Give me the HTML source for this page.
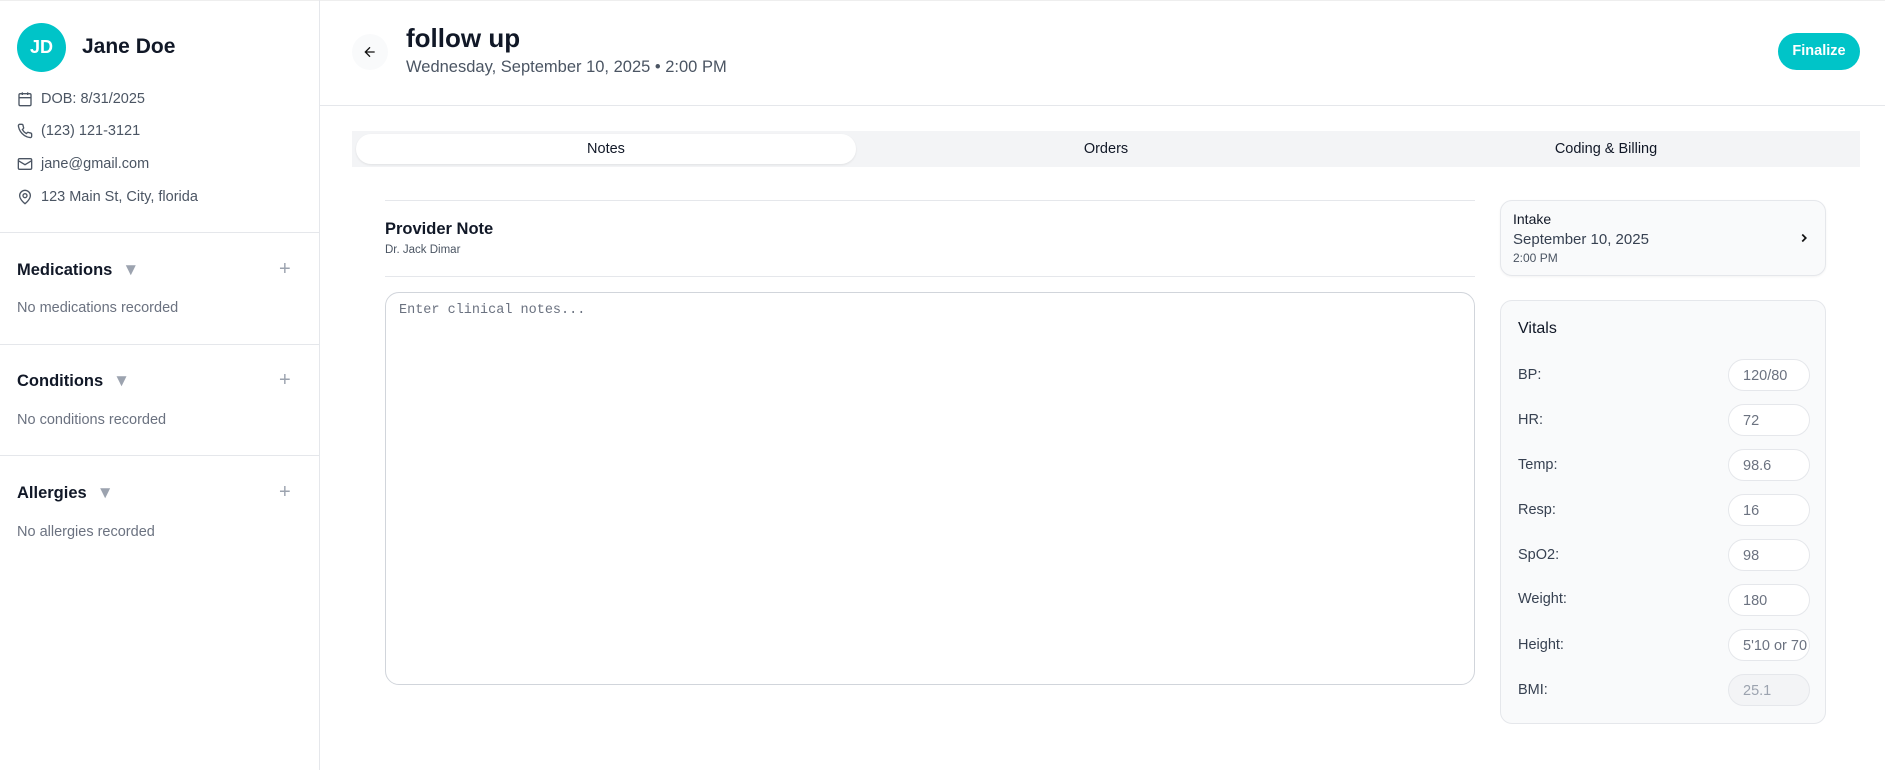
<!DOCTYPE html>
<html><head><meta charset="utf-8"><style>
*{box-sizing:border-box;margin:0;padding:0}
body{width:1885px;height:770px;position:relative;background:#fff;font-family:"Liberation Sans",Arial,sans-serif;color:#111827;overflow:hidden}
.a{position:absolute;white-space:nowrap}
.side{position:absolute;left:0;top:0;width:320px;height:770px;border-right:1px solid #e5e7eb}
.hr{position:absolute;height:1px;background:#e5e7eb}
.muted{color:#4b5563}
.lbl{font-size:14.5px;color:#374151}
.inp{position:absolute;left:1728px;width:82px;height:32px;border:1px solid #e5e7eb;border-radius:16px;background:#fff;font-size:14.5px;color:#6b7280;padding:8px 0 0 14px;overflow:hidden;white-space:nowrap}
.sec{font-size:16.5px;font-weight:bold;color:#111827}
.tri{color:#9ca3af;font-size:17px;margin-left:10px}
.plus{position:absolute;left:279px;font-size:20px;color:#9ca3af;font-weight:300}
</style></head><body>
<div class="hr" style="left:0;top:0;width:1885px;background:#eee"></div>
<div class="side"></div>
<div class="a" style="left:17px;top:23px;width:49px;height:49px;border-radius:50%;background:#00c4c8;color:#fff;font-size:18px;font-weight:bold;text-align:center;line-height:49px">JD</div>
<div class="a" style="left:82px;top:35px;font-size:21px;font-weight:bold">Jane Doe</div>
<svg class="a" style="left:17px;top:91px" width="16" height="16" viewBox="0 0 24 24" fill="none" stroke="#4b5563" stroke-width="2"><rect x="3" y="4" width="18" height="18" rx="2"/><path d="M16 2v4M8 2v4M3 10h18"/></svg>
<div class="a muted" style="left:41px;top:91px;font-size:14.5px">DOB: 8/31/2025</div>
<svg class="a" style="left:17px;top:123px" width="16" height="16" viewBox="0 0 24 24" fill="none" stroke="#4b5563" stroke-width="2"><path d="M22 16.9v3a2 2 0 0 1-2.2 2 19.8 19.8 0 0 1-8.6-3.1 19.5 19.5 0 0 1-6-6A19.8 19.8 0 0 1 2.1 4.2 2 2 0 0 1 4.1 2h3a2 2 0 0 1 2 1.7c.1 1 .4 1.9.7 2.8a2 2 0 0 1-.5 2.1L8 9.9a16 16 0 0 0 6 6l1.3-1.3a2 2 0 0 1 2.1-.4c.9.3 1.8.6 2.8.7a2 2 0 0 1 1.7 2z"/></svg>
<div class="a muted" style="left:41px;top:123px;font-size:14.5px">(123) 121-3121</div>
<svg class="a" style="left:17px;top:156px" width="16" height="16" viewBox="0 0 24 24" fill="none" stroke="#4b5563" stroke-width="2"><rect x="2" y="4" width="20" height="16" rx="2"/><path d="m22 7-10 6L2 7"/></svg>
<div class="a muted" style="left:41px;top:156px;font-size:14.5px">jane@gmail.com</div>
<svg class="a" style="left:17px;top:189px" width="16" height="16" viewBox="0 0 24 24" fill="none" stroke="#4b5563" stroke-width="2"><path d="M20 10c0 6-8 12-8 12s-8-6-8-12a8 8 0 0 1 16 0z"/><circle cx="12" cy="10" r="3"/></svg>
<div class="a muted" style="left:41px;top:189px;font-size:14.5px">123 Main St, City, florida</div>
<div class="hr" style="left:0;top:232px;width:320px"></div>
<div class="a sec" style="left:17px;top:260px">Medications<span class="tri">▼</span></div><div class="a plus" style="top:258px">+</div>
<div class="a" style="left:17px;top:300px;font-size:14.5px;color:#6b7280">No medications recorded</div>
<div class="hr" style="left:0;top:344px;width:320px"></div>
<div class="a sec" style="left:17px;top:371px">Conditions<span class="tri">▼</span></div><div class="a plus" style="top:369px">+</div>
<div class="a" style="left:17px;top:412px;font-size:14.5px;color:#6b7280">No conditions recorded</div>
<div class="hr" style="left:0;top:455px;width:320px"></div>
<div class="a sec" style="left:17px;top:483px">Allergies<span class="tri">▼</span></div><div class="a plus" style="top:481px">+</div>
<div class="a" style="left:17px;top:524px;font-size:14.5px;color:#6b7280">No allergies recorded</div>

<div class="a" style="left:352px;top:34px;width:36px;height:36px;border-radius:50%;background:#f9fafb"></div>
<svg class="a" style="left:362px;top:44px" width="16" height="16" viewBox="0 0 24 24" fill="none" stroke="#111" stroke-width="2"><path d="M19 12H5M12 19l-7-7 7-7"/></svg>
<div class="a" style="left:406px;top:23px;font-size:26px;font-weight:bold">follow up</div>
<div class="a muted" style="left:406px;top:58px;font-size:16.5px">Wednesday, September 10, 2025 • 2:00 PM</div>
<div class="a" style="left:1778px;top:33px;width:82px;height:37px;border-radius:19px;background:#00c4c8;color:#fff;font-size:14.5px;font-weight:bold;text-align:center;line-height:37px">Finalize</div>
<div class="hr" style="left:320px;top:105px;width:1565px"></div>

<div class="a" style="left:352px;top:131px;width:1508px;height:36px;background:#f3f4f6"></div>
<div class="a" style="left:356px;top:134px;width:500px;height:30px;background:#fff;border-radius:15px;box-shadow:0 1px 2px rgba(0,0,0,.08)"></div>
<div class="a" style="left:356px;top:141px;width:500px;text-align:center;font-size:14.5px">Notes</div>
<div class="a" style="left:856px;top:141px;width:500px;text-align:center;font-size:14.5px">Orders</div>
<div class="a" style="left:1356px;top:141px;width:500px;text-align:center;font-size:14.5px">Coding &amp; Billing</div>

<div class="hr" style="left:385px;top:200px;width:1090px"></div>
<div class="a" style="left:385px;top:220px;font-size:16.5px;font-weight:bold">Provider Note</div>
<div class="a" style="left:385px;top:244px;font-size:11.5px;color:#4b5563">Dr. Jack Dimar</div>
<div class="hr" style="left:385px;top:276px;width:1090px"></div>
<div class="a" style="left:385px;top:292px;width:1090px;height:393px;border:1px solid #d1d5db;border-radius:14px"></div>
<div class="a" style="left:399px;top:303px;font-family:'Liberation Mono',monospace;font-size:13.5px;color:#6b7280">Enter clinical notes...</div>

<div class="a" style="left:1500px;top:200px;width:326px;height:76px;background:#f9fafb;border:1px solid #e5e7eb;border-radius:12px;box-shadow:0 1px 2px rgba(0,0,0,.05)"></div>
<div class="a" style="left:1513px;top:211px;font-size:14px">Intake</div>
<div class="a" style="left:1513px;top:231px;font-size:15px;color:#374151">September 10, 2025</div>
<div class="a" style="left:1513px;top:251px;font-size:12px;color:#4b5563">2:00 PM</div>
<svg class="a" style="left:1797px;top:231px" width="14" height="14" viewBox="0 0 24 24" fill="none" stroke="#111" stroke-width="3"><path d="m9 18 6-6-6-6"/></svg>

<div class="a" style="left:1500px;top:300px;width:326px;height:424px;background:#f9fafb;border:1px solid #e5e7eb;border-radius:12px"></div>
<div class="a" style="left:1518px;top:320px;font-size:16px">Vitals</div>
<div class="a lbl" style="left:1518px;top:367px">BP:</div><div class="inp" style="top:359px">120/80</div>
<div class="a lbl" style="left:1518px;top:412px">HR:</div><div class="inp" style="top:404px">72</div>
<div class="a lbl" style="left:1518px;top:457px">Temp:</div><div class="inp" style="top:449px">98.6</div>
<div class="a lbl" style="left:1518px;top:502px">Resp:</div><div class="inp" style="top:494px">16</div>
<div class="a lbl" style="left:1518px;top:547px">SpO2:</div><div class="inp" style="top:539px">98</div>
<div class="a lbl" style="left:1518px;top:591px">Weight:</div><div class="inp" style="top:584px">180</div>
<div class="a lbl" style="left:1518px;top:637px">Height:</div><div class="inp" style="top:629px">5'10 or 70</div>
<div class="a lbl" style="left:1518px;top:682px">BMI:</div><div class="inp" style="top:674px;background:#f3f4f6;color:#9ca3af">25.1</div>
</body></html>
